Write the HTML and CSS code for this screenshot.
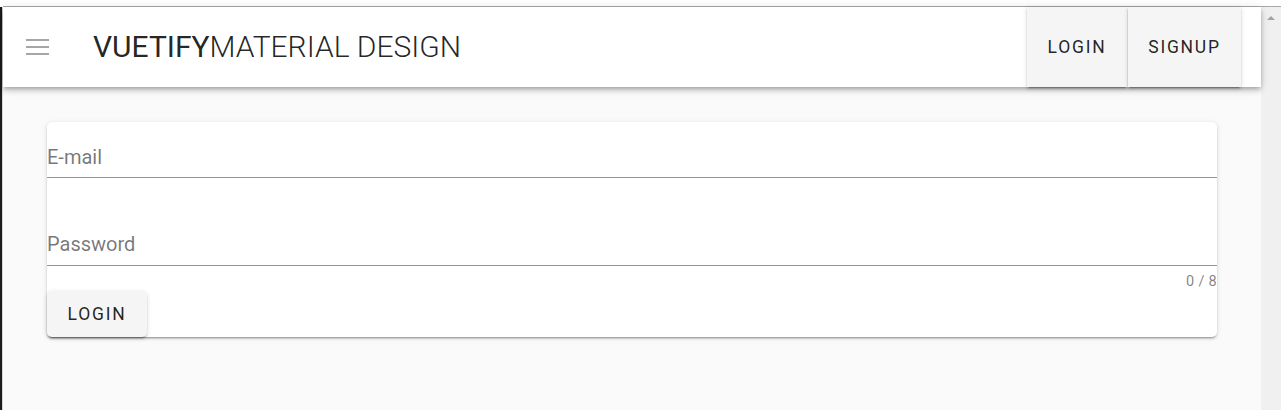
FILE: index.html
```html
<!DOCTYPE html>
<html lang="en">
<head>
<meta charset="utf-8">
<title>Vuetify Material Design</title>
<link rel="stylesheet" href="styles.css">
</head>
<body>
<div class="window">
  <div class="topstrip"></div>
  <div class="frame">
    <div class="left-edge"></div>
    <div class="app">
      <header class="toolbar">
        <button class="menu-btn" aria-label="menu">
          <svg width="24" height="16" viewBox="0 0 24 16"><rect x="0" y="0" width="23" height="2" fill="#a6a6a6"/><rect x="0" y="7" width="23" height="2" fill="#a6a6a6"/><rect x="0" y="14" width="23" height="2" fill="#a6a6a6"/></svg>
        </button>
        <div class="title"><span class="title-strong">VUETIFY</span><span class="title-light">MATERIAL DESIGN</span></div>
        <div class="spacer"></div>
        <div class="actions">
          <button class="btn btn-bar">LOGIN</button>
          <button class="btn btn-bar">SIGNUP</button>
        </div>
      </header>
      <main class="main">
        <form class="card">
          <div class="field">
            <div class="field-slot"><span class="label">E-mail</span></div>
            <div class="details"></div>
          </div>
          <div class="field">
            <div class="field-slot field-slot-pw"><span class="label">Password</span></div>
            <div class="details details-counter"><span class="counter">0 / 8</span></div>
          </div>
          <div class="form-actions">
            <button type="button" class="btn btn-card">LOGIN</button>
          </div>
        </form>
      </main>
    </div>
    <div class="scrollbar"><div class="arrow-up"></div></div>
  </div>
</div>
</body>
</html>
```

FILE: styles.css
```css
html, body {
  margin: 0;
  padding: 0;
  background: #ffffff;
  font-family: Roboto, "Liberation Sans", Arial, sans-serif;
  color: rgba(0, 0, 0, 0.87);
}

.window {
  width: 1281px;
  height: 410px;
  display: flex;
  flex-direction: column;
  overflow: hidden;
}

.topstrip {
  height: 6px;
  flex: none;
  border-bottom: 1px solid #a8a8a8;
  margin-left: 3px;
}

.frame {
  flex: 1;
  display: flex;
  min-height: 0;
}

.left-edge {
  width: 2px;
  flex: none;
  background: #1c1c1c;
  border-right: 1px solid #d6d6d6;
}

.app {
  flex: 1;
  display: flex;
  flex-direction: column;
  min-width: 0;
  background: #fafafa;
}

.toolbar {
  position: relative;
  z-index: 2;
  height: 80px;
  flex: none;
  display: flex;
  align-items: center;
  background: #ffffff;
  padding-right: 20px;
  box-shadow: 0 2px 4px -1px rgba(0,0,0,.2), 0 4px 5px 0 rgba(0,0,0,.14), 0 1px 10px 0 rgba(0,0,0,.12);
}

.menu-btn {
  width: 48px;
  height: 48px;
  margin-left: 11px;
  padding: 0;
  border: 0;
  background: transparent;
  display: flex;
  align-items: center;
  justify-content: center;
}

.menu-btn svg {
  display: block;
}

.title {
  margin-left: 31px;
  font-size: 30px;
  line-height: 36px;
  color: rgba(0, 0, 0, 0.87);
  white-space: nowrap;
}

.title-strong {
  font-weight: 400;
}

.title-light {
  font-weight: 300;
}

.spacer {
  flex: 1;
}

.actions {
  display: flex;
  align-self: stretch;
  gap: 1px;
}

.btn {
  font-family: Roboto, "Liberation Sans", Arial, sans-serif;
  font-size: 17.5px;
  font-weight: 400;
  letter-spacing: 0.1em;
  color: rgba(0, 0, 0, 0.87);
  background: #f5f5f5;
  border: 0;
  padding: 0 20px;
  min-width: 80px;
  box-shadow: 0 3px 1px -2px rgba(0,0,0,.2), 0 2px 2px 0 rgba(0,0,0,.14), 0 1px 5px 0 rgba(0,0,0,.12);
  cursor: pointer;
}

.btn-bar {
  height: 100%;
  border-radius: 0;
}

.btn-bar:first-child {
  width: 100px;
}

.btn-bar:last-child {
  width: 113px;
}

.main {
  flex: 1;
  padding: 35px 44px 0;
}

.card {
  background: #ffffff;
  border-radius: 5px;
  box-shadow: 0 3px 1px -2px rgba(0,0,0,.2), 0 2px 2px 0 rgba(0,0,0,.14), 0 1px 5px 0 rgba(0,0,0,.12);
  display: flex;
  flex-direction: column;
  margin: 0;
}

.field {
  display: flex;
  flex-direction: column;
}

.field-slot {
  padding-top: 23px;
  padding-bottom: 7px;
  border-bottom: 1px solid rgba(0, 0, 0, 0.42);
  display: flex;
}

.field-slot-pw {
  padding-bottom: 8px;
}

.label {
  font-size: 20px;
  line-height: 25px;
  color: rgba(0, 0, 0, 0.54);
}

.details {
  height: 31px;
}

.details-counter {
  height: 25px;
  display: flex;
  justify-content: flex-end;
  align-items: flex-start;
}

.counter {
  font-size: 14.5px;
  line-height: 18px;
  padding-top: 7px;
  color: rgba(0, 0, 0, 0.5);
  letter-spacing: 0.02em;
}

.form-actions {
  display: flex;
}

.btn-card {
  height: 46px;
  width: 100px;
  border-radius: 5px;
}

.scrollbar {
  width: 20px;
  flex: none;
  background: #f0f0f0;
  display: flex;
  justify-content: center;
}

.arrow-up {
  margin-top: 9px;
  width: 0;
  height: 0;
  border-left: 4px solid transparent;
  border-right: 4px solid transparent;
  border-bottom: 4px solid #a3a3a3;
}
```
